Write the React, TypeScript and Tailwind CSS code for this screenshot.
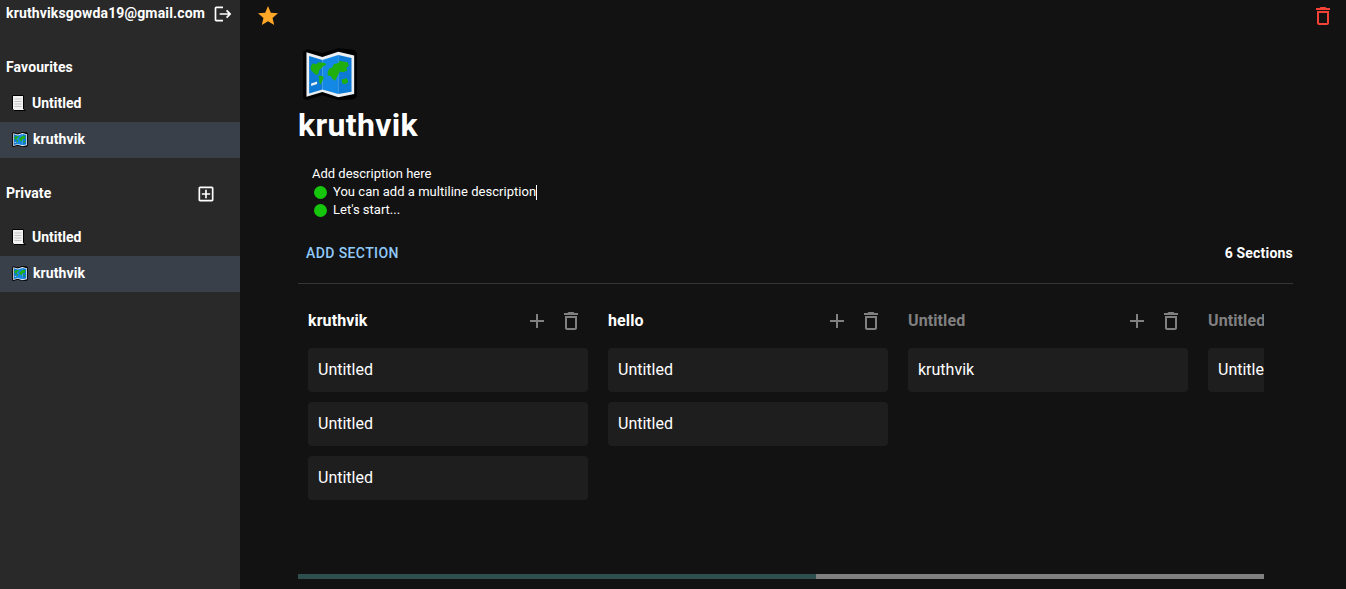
const roboto = { fontFamily: "Roboto, sans-serif" };

const Icon = ({ d, size = 24, className = "" }: { d: string; size?: number; className?: string }) => (
    <svg width={size} height={size} viewBox="0 0 24 24" fill="currentColor" className={`shrink-0 ${className}`}>
        <path d={d} />
    </svg>
);

const LOGOUT = "M17 7l-1.41 1.41L18.17 11H8v2h10.17l-2.58 2.58L17 17l5-5zM4 5h8V3H4c-1.1 0-2 .9-2 2v14c0 1.1.9 2 2 2h8v-2H4V5z";
const ADD_BOX = "M19 3H5c-1.11 0-2 .9-2 2v14c0 1.1.89 2 2 2h14c1.1 0 2-.9 2-2V5c0-1.1-.9-2-2-2zm0 16H5V5h14v14zm-8-2h2v-4h4v-2h-4V7h-2v4H7v2h4z";
const ADD = "M19 13h-6v6h-2v-6H5v-2h6V5h2v6h6v2z";
const TRASH = "M6 19c0 1.1.9 2 2 2h8c1.1 0 2-.9 2-2V7H6v12zM8 9h8v10H8V9zm7.5-5l-1-1h-5l-1 1H5v2h14V4h-3.5z";
const STAR = "M12 17.27L18.18 21l-1.64-7.03L22 9.24l-7.19-.61L12 2 9.19 8.63 2 9.24l5.46 4.73L5.82 21z";

const MapEmoji = ({ width, height }: { width: number; height: number }) => (
    <svg width={width} height={height} viewBox="42 25 162 157" className="shrink-0">
        <path d="M42 36 L54 28 L100 40 L148 26 L196 30 L204 40 L204 172 L194 180 L148 182 L100 168 L52 182 L42 176 Z" fill="#000" />
        <path d="M52 38 L100 52 L148 36 L196 48 L196 164 L148 174 L100 158 L52 172 Z" fill="#eceff1" />
        <path d="M60 49 L100 61 L100 150 L60 162 Z" fill="#0d7ad6" />
        <path d="M100 61 L148 46 L148 164 L100 150 Z" fill="#1388e4" />
        <path d="M148 46 L188 55 L188 157 L148 164 Z" fill="#0d7ad6" />
        <g fill="#1fb010">
            <path d="M64 82 L70 72 L82 74 L88 68 L108 70 L112 76 L102 80 L96 88 L90 92 L88 104 L80 106 L72 98 L66 92 Z" />
            <path d="M88 108 L102 110 L104 116 L98 128 L95 136 L91 130 L90 118 Z" />
            <path d="M116 98 L120 88 L130 84 L134 74 L148 70 L152 64 L176 68 L180 78 L172 86 L176 92 L164 98 L152 96 L148 106 L138 124 L130 118 L126 110 L116 108 Z" />
            <path d="M158 120 L174 116 L178 128 L170 134 L160 132 Z" />
        </g>
        <path d="M66 132 L84 126 L84 134 L66 140 Z" fill="#eceff1" />
    </svg>
);

const PageEmoji = () => (
    <svg width={14} height={16} viewBox="0 0 14 16" className="shrink-0">
        <path d="M0.5 0.5 H11.5 V14 L13.5 15.5 H2 L0.5 14 Z" fill="#f2f2f2" stroke="#000" strokeWidth="1" />
        <path d="M2.5 4 H9.5 M2.5 6.5 H9.5 M2.5 9 H9.5 M2.5 11.5 H9.5" stroke="#c4c4c4" strokeWidth="1" />
    </svg>
);

const Dot = () => <span className="w-[13px] h-[13px] rounded-full bg-[#16c60c] shrink-0 ml-[2px] mr-[6px]" />;

const SidebarItem = ({ emoji, label, active }: { emoji: "map" | "page"; label: string; active?: boolean }) => (
    <div className={`h-9 flex items-center pl-3 pb-[2px] text-sm font-bold text-white ${active ? "bg-[#39404a]" : ""}`}>
        {emoji === "map" ? <MapEmoji width={16} height={15} /> : <PageEmoji />}
        <span className={emoji === "map" ? "ml-[5px] tracking-[0.1px]" : "ml-[6px]"}>{label}</span>
    </div>
);

const sections = [
    { title: "kruthvik", cards: ["Untitled", "Untitled", "Untitled"] },
    { title: "hello", cards: ["Untitled", "Untitled"] },
    { title: "", cards: ["kruthvik"] },
    { title: "", cards: ["Untitled"] },
    { title: "", cards: [] },
    { title: "", cards: [] },
];

const Column = ({ title, cards }: { title: string; cards: string[] }) => (
    <div className="w-[300px] shrink-0 px-[10px]">
        <div className="h-[30px] flex items-center justify-between pr-[5px]">
            <span className={`text-base font-bold tracking-[0.1px] ${title ? "text-white" : "text-[#808080]"}`}>{title || "Untitled"}</span>
            <div className="flex items-center gap-[10px] text-[#808080]">
                <Icon d={ADD} />
                <Icon d={TRASH} />
            </div>
        </div>
        <div className="mt-3 flex flex-col gap-[10px]">
            {cards.map((card, i) => (
                <div key={i} className="h-11 flex items-center px-[10px] rounded bg-[#1e1e1e] text-base text-white">
                    {card}
                </div>
            ))}
        </div>
    </div>
);

export default function App() {
    return (
        <div className="flex w-screen h-screen overflow-hidden bg-[#121212] text-white" style={roboto}>
            {/* Sidebar */}
            <aside className="w-60 shrink-0 bg-[#292929]">
                <div className="h-[26px] flex items-center justify-between pl-[6px] pr-[7px] text-sm font-bold">
                    <span className="tracking-[0.15px]">kruthviksgowda19@gmail.com</span>
                    <Icon d={LOGOUT} size={20} className="mt-[2px]" />
                </div>
                <div className="mt-[22px] h-[38px] flex items-center pl-[6px] text-sm font-bold tracking-[0.1px]">Favourites</div>
                <SidebarItem emoji="page" label="Untitled" />
                <SidebarItem emoji="map" label="kruthvik" active />
                <div className="mt-2 h-[54px] flex items-center justify-between pl-[6px] pr-6 text-sm font-bold">
                    <span className="tracking-[0.1px]">Private</span>
                    <Icon d={ADD_BOX} size={20} className="mt-[2px]" />
                </div>
                <SidebarItem emoji="page" label="Untitled" />
                <SidebarItem emoji="map" label="kruthvik" active />
            </aside>

            {/* Board */}
            <main className="flex-1 min-w-0 flex flex-col">
                <div className="h-8 flex items-center justify-between pl-4 pr-[11px]">
                    <Icon d={STAR} className="text-[#ffa726]" />
                    <Icon d={TRASH} className="text-[#f44336]" />
                </div>
                <div className="pl-[58px] pr-[53px]">
                    <div className="mt-4 pl-[5px]">
                        <MapEmoji width={54} height={52} />
                    </div>
                    <h1 className="h-[50px] flex items-center text-[32px] font-bold tracking-[0.35px]">kruthvik</h1>
                    <div className="mt-[15px] pl-[14px] text-[13px] leading-[18px]">
                        <div>Add description here</div>
                        <div className="flex items-center">
                            <Dot />
                            <span className="tracking-[0.03px]">You can add a multiline description</span>
                            <span className="w-px h-[15px] bg-white" />
                        </div>
                        <div className="flex items-center">
                            <Dot />
                            <span>Let's start...</span>
                        </div>
                    </div>
                    <div className="mt-4 h-[36px] flex items-center justify-between pl-2 text-sm">
                        <span className="font-medium tracking-[0.4px] text-[#90caf9]">ADD SECTION</span>
                        <span className="font-bold tracking-[0.2px]">6 Sections</span>
                    </div>
                    <div className="mt-3 h-px bg-white/15" />
                </div>
                <div className="ml-[58px] w-[966px] mt-[22px]">
                    <div className="flex overflow-hidden h-[268px]">
                        {sections.map((section, i) => (
                            <Column key={i} title={section.title} cards={section.cards} />
                        ))}
                    </div>
                    <div className="h-[5px] bg-[#808080]">
                        <div className="w-[518px] h-full bg-[#2f4f4f]" />
                    </div>
                </div>
            </main>
        </div>
    );
}
